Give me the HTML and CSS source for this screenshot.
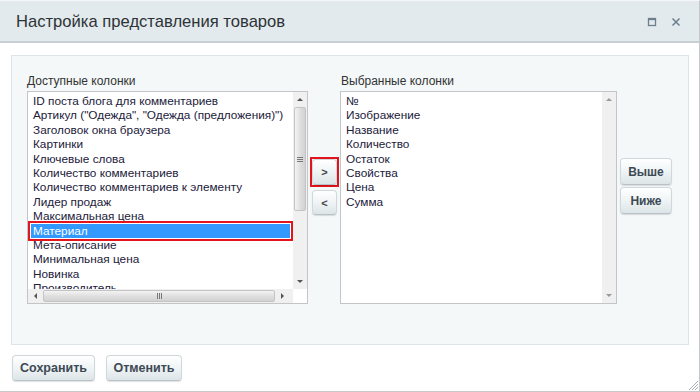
FILE: index.html
```html
<!DOCTYPE html>
<html lang="ru">
<head>
<meta charset="utf-8">
<title>Настройка представления товаров</title>
<link rel="stylesheet" href="styles.css">
</head>
<body>
<div class="dialog">
  <div class="titlebar">
    <div class="title">Настройка представления товаров</div>
    <div class="title-icons">
      <svg class="ticon" width="10" height="10" viewBox="0 0 10 10"><rect x="1.5" y="1.5" width="7" height="7" fill="none" stroke="#6d7e8d" stroke-width="1.3"/><line x1="1.5" y1="2.4" x2="8.5" y2="2.4" stroke="#6d7e8d" stroke-width="1.5"/></svg>
      <svg class="ticon" width="10" height="10" viewBox="0 0 10 10"><path d="M1.5 1.5 L8.5 8.5 M8.5 1.5 L1.5 8.5" stroke="#6d7e8d" stroke-width="1.5" fill="none"/></svg>
    </div>
  </div>
  <div class="content">
    <div class="panel">
      <div class="col">
        <div class="label">Доступные колонки</div>
        <div class="listbox left-list">
          <div class="items">
            <div class="item">ID поста блога для комментариев</div>
            <div class="item">Артикул ("Одежда", "Одежда (предложения)")</div>
            <div class="item">Заголовок окна браузера</div>
            <div class="item">Картинки</div>
            <div class="item">Ключевые слова</div>
            <div class="item">Количество комментариев</div>
            <div class="item">Количество комментариев к элементу</div>
            <div class="item">Лидер продаж</div>
            <div class="item">Максимальная цена</div>
            <div class="item selected">Материал</div>
            <div class="item">Мета-описание</div>
            <div class="item">Минимальная цена</div>
            <div class="item">Новинка</div>
            <div class="item">Производитель</div>
          </div>
          <div class="vscroll">
            <div class="arrow-box"><span class="tri up"></span></div>
            <div class="vthumb"><span class="grip-h"></span></div>
            <div class="vtrack"></div>
            <div class="arrow-box"><span class="tri down"></span></div>
          </div>
          <div class="hscroll">
            <div class="arrow-box-h"><span class="tri left"></span></div>
            <div class="hthumb"><span class="grip-v"></span></div>
            <div class="arrow-box-h"><span class="tri right"></span></div>
          </div>
          <div class="corner"></div>
        </div>
      </div>
      <div class="arrows">
        <div class="highlight"><button class="btn arrow-btn">&gt;</button></div>
        <button class="btn arrow-btn back">&lt;</button>
      </div>
      <div class="col">
        <div class="label label-right">Выбранные колонки</div>
        <div class="listbox right-list">
          <div class="items">
            <div class="item">№</div>
            <div class="item">Изображение</div>
            <div class="item">Название</div>
            <div class="item">Количество</div>
            <div class="item">Остаток</div>
            <div class="item">Свойства</div>
            <div class="item">Цена</div>
            <div class="item">Сумма</div>
          </div>
          <div class="vscroll full">
            <div class="arrow-box"><span class="tri up light"></span></div>
            <div class="vtrack"></div>
            <div class="arrow-box"><span class="tri down light"></span></div>
          </div>
        </div>
      </div>
      <div class="side">
        <button class="btn side-btn up-btn">Выше</button>
        <button class="btn side-btn">Ниже</button>
      </div>
    </div>
    <div class="footer">
      <button class="btn foot-btn save">Сохранить</button>
      <button class="btn foot-btn cancel">Отменить</button>
    </div>
  </div>
  <svg class="resize" width="12" height="12" viewBox="0 0 12 12"><path d="M11 2 L2 11 M11 5 L5 11 M11 8 L8 11" stroke="#b0b0b0" stroke-width="1"/></svg>
</div>
</body>
</html>
```

FILE: styles.css
```css
* { box-sizing: border-box; }
html, body { margin: 0; padding: 0; }
body {
  width: 700px;
  height: 392px;
  background: #fff;
  font-family: "Liberation Sans", Arial, sans-serif;
  overflow: hidden;
}
.dialog {
  position: relative;
  width: 700px;
  height: 392px;
  border-right: 1px solid #c6c9cb;
  border-bottom: 1px solid #c6c9cb;
  border-top: 1px solid #f4f6f7;
  background: #fff;
}
.titlebar {
  height: 42px;
  background: #e2eaed;
  border-bottom: 2px solid #c9d0d3;
  display: flex;
  align-items: center;
  justify-content: space-between;
  padding: 0 18px 0 16px;
}
.title {
  font-size: 16.6px;
  color: #2d3336;
  margin-top: 1px;
}
.title-icons {
  display: flex;
  gap: 14px;
  align-items: center;
  margin-top: 2px;
}
.ticon { display: block; }
.content {
  padding: 12px 10px 0 11px;
}
.panel {
  height: 290px;
  background: #f4f8f9;
  border: 1px solid #dde5e8;
  padding: 19px 0 0 15px;
  display: flex;
  align-items: flex-start;
}
.col { display: flex; flex-direction: column; }
.label {
  font-size: 12px;
  line-height: 13px;
  color: #333;
  margin-bottom: 3px;
}
.label-right { padding-left: 1px; }
.listbox {
  position: relative;
  height: 213px;
  background: #fff;
  border: 1px solid #c3c6c8;
  overflow: hidden;
}
.left-list { width: 281px; }
.right-list { width: 277px; }
.items {
  padding: 2px 0 0 3px;
  width: 262px;
}
.item {
  font-size: 11.8px;
  line-height: 14.4px;
  height: 14.4px;
  padding-left: 2px;
  color: #22203a;
  white-space: nowrap;
}
.selected {
  background: #3399ff;
  color: #fff;
  box-shadow: 0 0 0 1px #fff, 0 0 0 3px #e3141b;
  position: relative;
}
.vscroll {
  position: absolute;
  top: 0;
  right: 0;
  width: 14px;
  bottom: 14px;
  background: #f0f0f0;
  display: flex;
  flex-direction: column;
}
.vscroll.full { bottom: 0; }
.arrow-box {
  height: 15px;
  display: flex;
  align-items: center;
  justify-content: center;
  flex: none;
}
.vthumb {
  height: 104px;
  margin: 0 1px;
  border: 1px solid #c4c4c4;
  border-radius: 2px;
  background: linear-gradient(to right, #f3f3f3, #dcdcdc 60%, #d2d2d2);
  display: flex;
  align-items: center;
  justify-content: center;
  flex: none;
}
.vtrack { flex: 1; }
.grip-h {
  width: 6px;
  height: 5px;
  border-top: 1px solid #777;
  border-bottom: 1px solid #777;
  position: relative;
}
.grip-h::after {
  content: "";
  position: absolute;
  left: 0; right: 0; top: 1px;
  border-top: 1px solid #777;
}
.hscroll {
  position: absolute;
  left: 0;
  right: 14px;
  bottom: 0;
  height: 14px;
  background: #f0f0f0;
  display: flex;
  align-items: stretch;
}
.arrow-box-h {
  width: 15px;
  display: flex;
  align-items: center;
  justify-content: center;
  flex: none;
}
.hthumb {
  width: 232px;
  margin: 1px 0;
  border: 1px solid #c4c4c4;
  border-radius: 2px;
  background: linear-gradient(to bottom, #f3f3f3, #dcdcdc 60%, #d2d2d2);
  display: flex;
  align-items: center;
  justify-content: center;
}
.grip-v {
  width: 5px;
  height: 6px;
  border-left: 1px solid #777;
  border-right: 1px solid #777;
  position: relative;
}
.grip-v::after {
  content: "";
  position: absolute;
  top: 0; bottom: 0; left: 1px;
  border-left: 1px solid #777;
}
.corner {
  position: absolute;
  right: 0;
  bottom: 0;
  width: 14px;
  height: 14px;
  background: #fff;
}
.tri { width: 0; height: 0; display: block; }
.tri.up { border-left: 3px solid transparent; border-right: 3px solid transparent; border-bottom: 3px solid #555; }
.tri.down { border-left: 3px solid transparent; border-right: 3px solid transparent; border-top: 3px solid #555; }
.tri.left { border-top: 3px solid transparent; border-bottom: 3px solid transparent; border-right: 3px solid #555; }
.tri.right { border-top: 3px solid transparent; border-bottom: 3px solid transparent; border-left: 3px solid #555; }
.tri.light.up { border-bottom-color: #999; }
.tri.light.down { border-top-color: #999; }
.btn {
  font-family: "Liberation Sans", Arial, sans-serif;
  font-weight: bold;
  font-size: 12px;
  color: #3d4a55;
  background: linear-gradient(to bottom, #ffffff, #f1f5f6 45%, #dde5e8);
  border: 1px solid #d1d8db;
  border-bottom-color: #b9c2c6;
  border-radius: 4px;
  box-shadow: 0 1px 1px rgba(0,0,0,0.12);
  padding: 0;
  cursor: pointer;
  display: block;
}
.arrows {
  display: flex;
  flex-direction: column;
  gap: 3px;
  margin: 82px 1px 0 2px;
  width: 29px;
}
.highlight {
  border: 2px solid #e3141b;
  width: 29px;
  height: 30px;
  padding: 0 0 0 0;
}
.arrow-btn {
  width: 25px;
  height: 26px;
  font-size: 11px;
  color: #444;
}
.back {
  height: 25px;
  margin-left: 2px;
}
.side {
  display: flex;
  flex-direction: column;
  gap: 2px;
  margin: 83px 0 0 3px;
}
.side-btn {
  width: 52px;
  height: 27px;
}
.footer {
  display: flex;
  gap: 11px;
  margin-top: 10px;
  padding-left: 1px;
}
.foot-btn {
  height: 26px;
  font-size: 12.5px;
}
.save { width: 83px; }
.cancel { width: 76px; }
.resize {
  position: absolute;
  right: 0;
  bottom: 0;
}
```
